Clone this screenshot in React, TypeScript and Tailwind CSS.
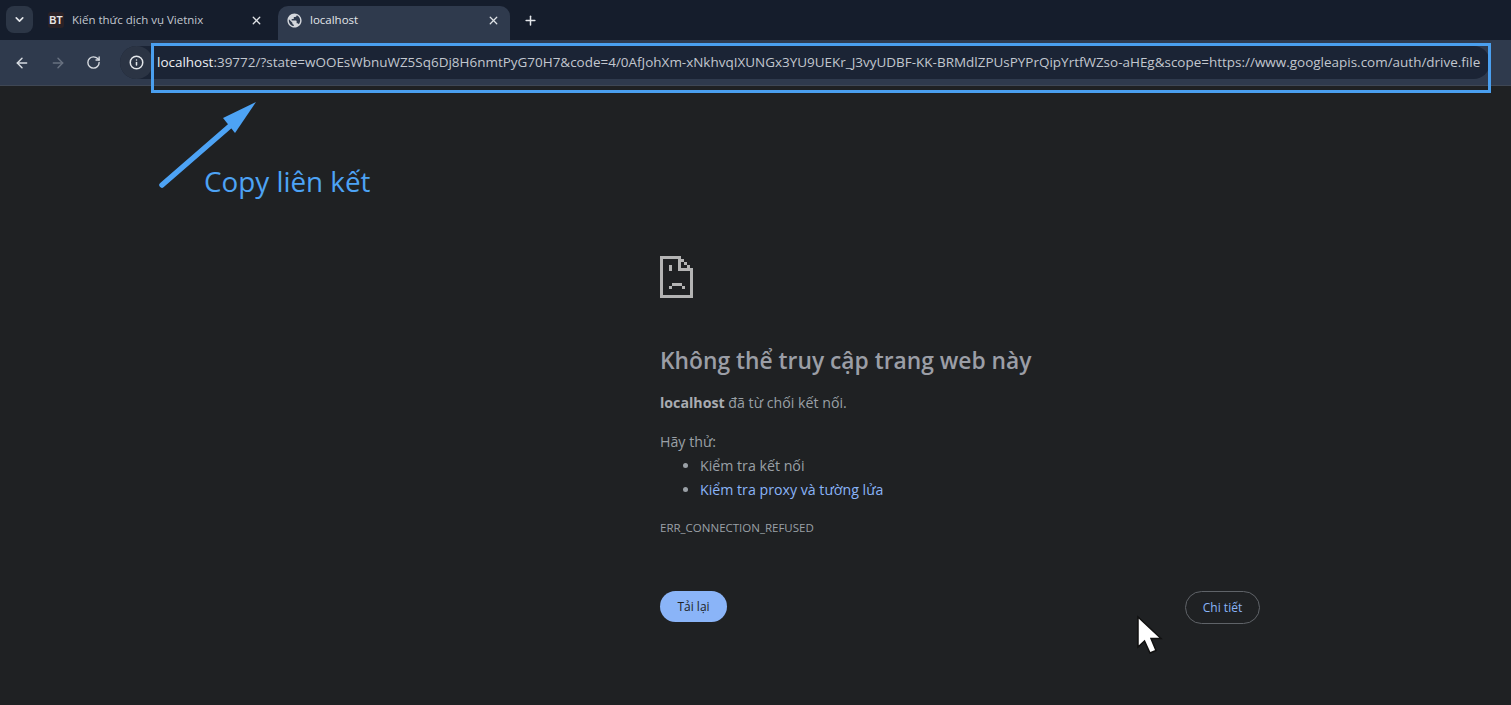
import { ArrowLeft, ArrowRight, ChevronDown, Info, Plus, RotateCw, X } from "lucide-react";
import { MdPublic } from "react-icons/md";

const url =
  ":39772/?state=wOOEsWbnuWZ5Sq6Dj8H6nmtPyG70H7&code=4/0AfJohXm-xNkhvqIXUNGx3YU9UEKr_J3vyUDBF-KK-BRMdlZPUsPYPrQipYrtfWZso-aHEg&scope=https://www.googleapis.com/auth/drive.file";

function SadFile() {
  return (
    <svg width="33" height="42" viewBox="0 0 33 42" className="block" shapeRendering="crispEdges" fill="#b4b4b4">
      <path d="M0 0h21v3H3v36h27V12h3v30H0z" />
      <path d="M18 0h3v12h12v3H18z" />
      <path d="M21 3h3v3h-3zM24 6h3v3h-3zM27 9h3v3h-3z" />
      <path d="M9 9h3v6H9z" />
      <path d="M12 27h10v3H12zM9 30h3v3H9zM22 30h3v3h-3z" />
    </svg>
  );
}

function Tab({ active, title, icon }: { active?: boolean; title: string; icon: React.ReactNode }) {
  return (
    <div
      className={
        active
          ? "flex h-[34px] w-[232px] items-center rounded-t-[10px] bg-[#2f3a4d] pb-[6px] pl-[8px] pr-[10px] text-[#e3e6ea]"
          : "flex h-[34px] w-[237px] items-center pb-[6px] pl-[7px] pr-[15px] text-[#c3c8d0]"
      }
    >
      {icon}
      <span className={active ? "flex-1 whitespace-nowrap pl-[7px] text-[11.5px] leading-[16px]" : "flex-1 whitespace-nowrap pl-[8px] text-[11.5px] leading-[16px]"}>
        {title}
      </span>
      <X size={13} strokeWidth={2.4} className="text-[#dfe2e6]" />
    </div>
  );
}

export default function App() {
  return (
    <div className="relative flex h-[705px] w-[1511px] flex-col overflow-hidden bg-[#1f2123] font-['Open_Sans','Noto_Sans',sans-serif]">
      <div className="flex h-[40px] items-end bg-[#151d2c] pl-[6px]">
        <div className="mb-[7px] flex h-[27px] w-[27px] items-center justify-center rounded-[8px] bg-[#2c3646] text-[#e3e6ea]">
          <ChevronDown size={13} strokeWidth={3} />
        </div>
        <div className="ml-[8px] flex items-end">
          <Tab
            title="Kiến thức dịch vụ Vietnix"
            icon={
              <span className="flex h-[16px] w-[16px] items-center justify-center rounded-[3px] bg-[#2a2126] font-['Liberation_Sans'] text-[10px] font-bold text-[#e9e6e6]">
                BT
              </span>
            }
          />
          <Tab active title="localhost" icon={<MdPublic size={17} className="text-[#d5d8dd]" />} />
        </div>
        <div className="mb-[12px] ml-[13px] text-[#e3e6ea]">
          <Plus size={15} strokeWidth={2.4} />
        </div>
      </div>

      <div className="flex h-[46px] items-center border-b border-[#3f4754] bg-[#2f3a4d] pl-[14px] pr-[21px]">
        <ArrowLeft size={16} strokeWidth={2.2} className="text-[#d8dce2]" />
        <ArrowRight size={16} strokeWidth={2.2} className="ml-[20px] text-[#687180]" />
        <RotateCw size={15} strokeWidth={2.2} className="ml-[20px] text-[#d8dce2]" />
        <div className="ml-[19px] flex h-[33px] flex-1 items-center rounded-full bg-[#1b2435]">
          <div className="flex h-[33px] w-[33px] items-center justify-center rounded-full bg-[#2b3444]">
            <Info size={15} strokeWidth={2.4} className="text-[#e3e6ea]" />
          </div>
          <div className="ml-[4px] whitespace-nowrap text-[13.48px] text-[#c2c7cf]">
            <span className="text-[#eef0f3]">localhost</span>
            {url}
          </div>
        </div>
      </div>

      <main className="flex-1 pl-[660px] pt-[170px] text-[#9aa0a6]">
        <SadFile />
        <h1 className="mt-[48px] text-[22.8px] font-semibold leading-[30px] text-[#9b9ea6]">Không thể truy cập trang web này</h1>
        <p className="mt-[17px] text-[14.2px] leading-[20px]">
          <b className="font-bold text-[#a9acb2]">localhost</b> đã từ chối kết nối.
        </p>
        <p className="mt-[19px] text-[14.2px] leading-[20px]">Hãy thử:</p>
        <ul className="mt-[2px] list-disc pl-[40px] text-[14.2px] leading-[24px]">
          <li>Kiểm tra kết nối</li>
          <li className="text-[#8ab4f8] marker:text-[#9aa0a6]">Kiểm tra proxy và tường lửa</li>
        </ul>
        <p className="mt-[18px] text-[11.5px] leading-[16px]">ERR_CONNECTION_REFUSED</p>
        <div className="mt-[53px] flex w-[600px] items-center justify-between">
          <button className="h-[31px] w-[67px] rounded-full bg-[#8ab4f8] text-[12px] text-[#202124]">Tải lại</button>
          <button className="mt-[2px] h-[33px] w-[75px] rounded-full border border-[#5f6368] text-[12px] text-[#8ab4f8]">Chi tiết</button>
        </div>
      </main>

      {/* annotation drawn over the screenshot */}
      <div className="absolute left-[151px] top-[43px] h-[50px] w-[1340px] border-[3px] border-[#4a9fef]" />
      <svg className="absolute left-[155px] top-[98px]" width="110" height="95" viewBox="0 0 110 95">
        <path d="M7 87L75 28" stroke="#4da3f5" strokeWidth="5.5" strokeLinecap="round" />
        <path d="M101 4L68 20L80 35z" fill="#4da3f5" />
      </svg>
      <div className="absolute left-[204px] top-[162px] text-[27.8px] leading-[38px] text-[#4da3f5]">Copy liên kết</div>
      <svg className="absolute left-[1135px] top-[614px]" width="30" height="44" viewBox="0 0 30 44">
        <path d="M3 3v30l6.5-6 5.5 12 6-2.5-5-12h10z" fill="#fff" stroke="#111" strokeWidth="1.5" />
      </svg>
    </div>
  );
}
